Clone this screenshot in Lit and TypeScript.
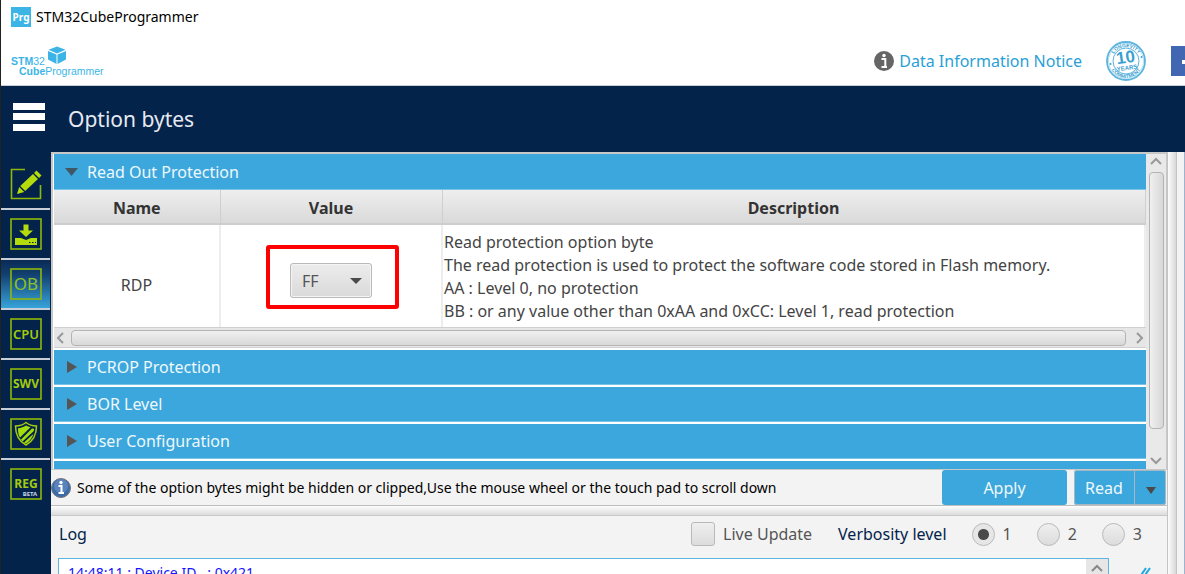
import { LitElement, html, css, svg } from "lit";
import { customElement, state } from "lit/decorators.js";

const up = svg`<path d="M2 9 L7 4 L12 9" />`;
const down = svg`<path d="M2 4 L7 9 L12 4" />`;
const left = svg`<path d="M9 2 L4 7 L9 12" />`;
const right = svg`<path d="M5 2 L10 7 L5 12" />`;

const chevron = (shape: unknown) =>
  html`<svg class="chevron" viewBox="0 0 14 14" width="14" height="14" aria-hidden="true">${shape}</svg>`;

@customElement("side-nav")
class SideNav extends LitElement {
  static styles = css`
    :host {
      display: block;
      background: #03234b;
      padding: 8px 1px 0 0;
    }
    .item {
      appearance: none;
      display: flex;
      align-items: center;
      justify-content: center;
      width: 100%;
      height: 50px;
      border: 0;
      border-bottom: 2px solid #c9ced6;
      padding: 0;
      background: none;
    }
    .item:last-child {
      border-bottom-color: transparent;
    }
    .active {
      background: linear-gradient(#0a2b55, #12406f 30%, #37a3da);
    }
  `;

  private icons: [string, unknown][] = [
    ["Memory & file editing", svg`
      <path d="M15 1.5H1.5V30.5H30.500V17" fill="none" stroke="#8fb80a" stroke-width="1.6" />
      <path d="M7 26l2.200-7 5 5zM10.200 18L23 6l5 5L15.200 23zM24 5l2.500-2.500 5 5L29 10z" fill="#b4dc0c" />`],
    ["Erasing & programming", svg`
      <rect x="1" y="1" width="30" height="30" fill="none" stroke="#8fb80a" stroke-width="1.6" />
      <path d="M13.500 6.500h5v6H23l-7 6.500-7-6.500h4.500z M5 20h6l5 2 5-2h6v7H5z" fill="#b4dc0c" />
      <path d="M19 24.500h1.500M22 24.500h1.500M25 24.500h1" stroke="#03234b" />`],
    ["Option bytes", svg`
      <rect x="1" y="1" width="30" height="30" fill="none" stroke="#8fb80a" stroke-width="1.6" />
      <text x="16" y="22" text-anchor="middle" font-family="Noto Sans, sans-serif" font-size="17" fill="#8fc31f">OB</text>`],
    ["CPU", svg`
      <rect x="1" y="1" width="30" height="30" fill="none" stroke="#8fb80a" stroke-width="1.6" />
      <text x="16" y="21" text-anchor="middle" font-family="Noto Sans, sans-serif" font-weight="600" font-size="13" fill="#a4cc0a">CPU</text>`],
    ["SWV", svg`
      <rect x="1" y="1" width="30" height="30" fill="none" stroke="#8fb80a" stroke-width="1.6" />
      <text x="16" y="20" text-anchor="middle" font-family="Noto Sans, sans-serif" font-weight="700" font-size="12" fill="#a4cc0a">SWV</text>`],
    ["Security", svg`
      <rect x="1" y="1" width="30" height="30" fill="none" stroke="#8fb80a" stroke-width="1.6" />
      <path d="M16 4.500C13 7 9 8 5.500 8c0 9 3 15 10.500 19C23.500 23 26.500 17 26.500 8 23 8 19 7 16 4.500z" fill="none" stroke="#a4cc0a" stroke-width="1.500" />
      <path d="M16 7.500c-2 1.500-5 2.500-8 2.700 0 4 .5 7 2 9.300L20.500 9.300C19 8.900 17.500 8.500 16 7.500zM11 21.500L22 10.500l2 .2-.2 2.300L12.500 23.500zM14 24.500l9.300-8.500c-1 4-3.300 7-7.300 9.500z" fill="#a4dc0c" />`],
    ["Registers", svg`
      <rect x="1" y="1" width="30" height="30" fill="none" stroke="#8fb80a" stroke-width="1.6" />
      <text x="16" y="20" text-anchor="middle" font-family="Noto Sans, sans-serif" font-weight="700" font-size="12" fill="#a4cc0a">REG</text>
      <text x="20" y="28" text-anchor="middle" font-family="Noto Sans, sans-serif" font-weight="700" font-size="6" fill="#c8d4e4">BETA</text>`],
  ];

  render() {
    return this.icons.map(
      ([name, icon]) => html`<button class="item ${name === "Option bytes" ? "active" : ""}" aria-label=${name}>
        <svg viewBox="0 0 32 32" width="32" height="32">${icon}</svg>
      </button>`,
    );
  }
}

@customElement("option-groups")
class OptionGroups extends LitElement {
  static styles = css`
    :host {
      display: grid;
      grid-template-columns: minmax(0, 1fr) 20px;
      min-height: 0;
      border: 1px solid #c8c8c8;
      border-width: 2px 1px 1px 2px;
      overflow: hidden;
      background: #fff;
    }
    .list {
      display: flex;
      flex-direction: column;
      gap: 2px;
      min-height: 0;
      overflow: hidden;
      padding-left: 1px;
    }
    .title {
      appearance: none;
      display: flex;
      flex: none;
      align-items: center;
      gap: 8px;
      width: 100%;
      height: 35px;
      box-sizing: border-box;
      border: 0;
      border-bottom: 1px solid #7cc3ea;
      padding: 0 11px;
      background: #3ca7dc;
      color: #eef8fd;
      font: inherit;
      text-align: left;
    }
    .title.open {
      height: 36px;
    }
    .marker {
      fill: #555;
    }
    .open .marker {
      fill: #3f5866;
    }
    .viewport {
      flex: none;
      height: 137px;
      overflow: hidden;
    }
    .group {
      flex: none;
    }
    table {
      width: 100%;
      border-collapse: collapse;
      table-layout: fixed;
      color: #444;
    }
    .name-col {
      width: 166px;
    }
    .value-col {
      width: 222px;
    }
    th {
      height: 34px;
      box-sizing: border-box;
      padding: 2px 0 0;
      border-right: 1px solid #cfcfcf;
      border-bottom: 2px solid #cdcdcd;
      background: linear-gradient(#eee, #d9d9d9);
      color: #333;
      font-weight: 700;
    }
    td {
      height: 118px;
      padding: 0 0 4px;
      border-right: 2px solid #ededed;
      text-align: center;
    }
    td.description {
      padding: 6px 0 0 1px;
      line-height: 23px;
      text-align: left;
      vertical-align: top;
      white-space: pre-line;
    }
    .highlight {
      display: inline-flex;
      border: 4px solid #f00;
      border-radius: 3px;
      padding: 14px 23px 7px 20px;
      margin: 0 0 16px 3px;
    }
    .combo {
      display: grid;
      align-items: center;
    }
    .combo > * {
      grid-area: 1 / 1;
    }
    select {
      appearance: none;
      width: 82px;
      height: 35px;
      border: 1px solid #b9b9b9;
      border-radius: 3px;
      padding: 0 11px;
      background: linear-gradient(#ececec, #dadada);
      box-shadow: inset 0 0 0 1px #f4f4f4;
      color: #555;
      font: inherit;
    }
    .arrow {
      justify-self: end;
      margin-right: 10px;
      fill: #4a4a4a;
      pointer-events: none;
    }
    .chevron {
      flex: none;
      fill: none;
      stroke: #999;
      stroke-width: 2;
    }
    .hbar {
      display: flex;
      align-items: center;
      height: 21px;
      box-sizing: border-box;
      border: 1px solid #d0d0d0;
      border-width: 1px 0;
      background: #e6e6e6;
    }
    .vbar {
      display: flex;
      flex-direction: column;
      align-items: center;
      background: #e9e9e9;
      padding: 1px 0;
    }
    .hthumb,
    .vthumb {
      box-sizing: border-box;
      border: 1px solid #b4b4b4;
      border-radius: 4px;
    }
    .hthumb {
      flex: 1;
      height: 16px;
      margin: 0 6px 0 3px;
      background: linear-gradient(#f0f0f0, #d8d8d8);
    }
    .vthumb {
      flex: 0 1 257px;
      width: 15px;
      margin-top: 3px;
      background: linear-gradient(90deg, #f0f0f0, #d8d8d8);
    }
    .spacer {
      flex: 1;
    }
  `;

  private renderTitle(name: string, open = false) {
    return html`<button class="title ${open ? "open" : ""}" aria-expanded=${open ? "true" : "false"}>
      <svg class="marker" viewBox="0 0 14 14" width="14" height="14">
        <path d=${open ? "M0 3h13L6.500 11z" : "M2 1v12l10-6z"} />
      </svg>
      ${name}
    </button>`;
  }

  render() {
    return html`
      <div class="list">
        <div class="group">
          ${this.renderTitle("Read Out Protection", true)}
          <div class="viewport">
            <table>
              <colgroup>
                <col class="name-col" />
                <col class="value-col" />
                <col />
              </colgroup>
              <thead>
                <tr><th>Name</th><th>Value</th><th>Description</th></tr>
              </thead>
              <tbody>
                <tr>
                  <td>RDP</td>
                  <td>
                    <span class="highlight">
                      <span class="combo">
                        <select aria-label="RDP value">
                          <option>FF</option>
                          <option>AA</option>
                          <option>BB</option>
                          <option>CC</option>
                        </select>
                        <svg class="arrow" viewBox="0 0 12 6" width="12" height="6"><path d="M0 0h12L6 6z" /></svg>
                      </span>
                    </span>
                  </td>
                  <td class="description">${[
                    "Read protection option byte",
                    "The read protection is used to protect the software code stored in Flash memory.",
                    "AA : Level 0, no protection",
                    "BB : or any value other than 0xAA and 0xCC: Level 1, read protection",
                    "CC : Level 2, chip protection",
                  ].join("\n")}</td>
                </tr>
              </tbody>
            </table>
          </div>
          <div class="hbar">${chevron(left)}<div class="hthumb"></div>${chevron(right)}</div>
        </div>
        ${["PCROP Protection", "BOR Level", "User Configuration", ""].map((n) => this.renderTitle(n))}
      </div>
      <div class="vbar">${chevron(up)}<div class="vthumb"></div><div class="spacer"></div>${chevron(down)}</div>
    `;
  }
}

@customElement("log-panel")
class LogPanel extends LitElement {
  static styles = css`
    :host {
      display: flex;
      flex-direction: column;
      min-height: 0;
      overflow: hidden;
      color: #03234b;
    }
    .bar {
      display: flex;
      flex: none;
      align-items: center;
      height: 42px;
      padding: 0 25px 6px 8px;
      box-sizing: border-box;
    }
    .grow {
      flex: 1;
    }
    label {
      display: flex;
      align-items: center;
      gap: 8px;
      color: #555;
    }
    fieldset {
      display: flex;
      align-items: center;
      gap: 25px;
      margin: 0 0 0 26px;
      border: 0;
      padding: 0;
    }
    input {
      appearance: none;
      flex: none;
      width: 24px;
      height: 24px;
      margin: 0;
      border: 1px solid #b9b9b9;
      background: linear-gradient(#efefef, #dcdcdc);
    }
    .check {
      border-radius: 3px;
    }
    .radio {
      width: 23px;
      height: 23px;
      border-radius: 50%;
    }
    .radio:checked {
      background: radial-gradient(circle, #4a4a4a 5px, #e6e6e6 6px);
    }
    .row {
      display: flex;
      flex: 1;
      padding-left: 7px;
      gap: 28px;
    }
    .output {
      flex: 1;
      box-sizing: border-box;
      display: flex;
      border: 1px solid #5bb5e0;
      border-width: 1px 1px 0 1px;
      background: #fff;
      color: #1414ff;
      font-size: 14px;
      line-height: 20px;
    }
    .line {
      flex: 1;
      padding: 4px 9px;
      white-space: pre;
    }
    .bar-cell {
      width: 22px;
      background: #e6e6e6;
      text-align: center;
    }
    .chevron {
      margin-top: 3px;
      fill: none;
      stroke: #888;
      stroke-width: 2;
    }
    .broom {
      flex: none;
      width: 30px;
      margin-top: 8px;
    }
  `;

  @state() private level = 1;

  render() {
    return html`
      <div class="bar">
        <span>Log</span>
        <span class="grow"></span>
        <label><input class="check" type="checkbox" />Live Update</label>
        <fieldset aria-label="Verbosity level">
          <span>Verbosity level</span>
          ${[1, 2, 3].map(
            (n) => html`<label>
              <input class="radio" type="radio" name="level" .checked=${n === this.level} @change=${() => (this.level = n)} />${n}
            </label>`,
          )}
        </fieldset>
      </div>
      <div class="row">
        <div class="output">
          <div class="line">14:48:11 : Device ID   : 0x421</div>
          <div class="bar-cell">${chevron(up)}</div>
        </div>
        <svg class="broom" viewBox="0 0 30 12" width="30" height="12" fill="none" stroke="#1ea7e0" stroke-width="2">
          <path d="M9 2L2 12M13 2L6 12" />
        </svg>
      </div>
    `;
  }
}

@customElement("app-root")
class AppRoot extends LitElement {
  static styles = css`
    :host {
      display: flex;
      flex-direction: column;
      height: 100vh;
      box-sizing: border-box;
      overflow: hidden;
      border-left: 1px solid #222;
      background: #fff;
      color: #111;
      font: 16px/20px "Noto Sans", "Open Sans", sans-serif;
    }
    .titlebar {
      display: flex;
      flex: none;
      align-items: center;
      gap: 5px;
      height: 33px;
      padding-left: 10px;
      color: #000;
      font-size: 14px;
    }
    .brandbar {
      display: flex;
      flex: none;
      align-items: center;
      height: 53px;
      padding: 4px 0 0 10px;
      box-sizing: border-box;
      border-bottom: 1px solid #c8ced8;
    }
    .grow {
      flex: 1;
    }
    .notice {
      display: flex;
      align-items: center;
      gap: 4px;
      margin-right: 24px;
      color: #2a9fd6;
      text-decoration: none;
    }
    .social {
      width: 14px;
      height: 30px;
      margin-left: 25px;
      background: #4267b2;
    }
    .header {
      display: flex;
      flex: none;
      align-items: center;
      gap: 23px;
      height: 66px;
      padding-left: 12px;
      background: #03234b;
      color: #e6eaf0;
    }
    .menu {
      appearance: none;
      display: flex;
      border: 0;
      padding: 0 0 4px;
      background: none;
    }
    h1 {
      margin: 0;
      font-size: 21px;
      font-weight: 400;
      line-height: 28px;
    }
    .body {
      display: grid;
      flex: 1;
      min-height: 0;
      grid-template-columns: 50px minmax(0, 1fr) 10px 8px;
    }
    .split {
      display: grid;
      grid-template-rows: minmax(0, 1fr) 36px 10px 58px;
      min-height: 0;
      background: #f3f3f3;
    }
    .hint {
      display: flex;
      align-items: center;
      gap: 6px;
      border-bottom: 1px solid #bdbdbd;
      color: #000;
      font-size: 14px;
    }
    .action {
      appearance: none;
      height: 35px;
      border: 0;
      border-radius: 3px;
      padding: 0;
      background: #3ca7dc;
      color: #eef8fd;
      font: inherit;
      font-size: 16px;
    }
    .apply {
      width: 125px;
    }
    .read {
      display: flex;
      margin: 0 1px;
      border-radius: 3px;
      background: #3ca7dc;
      box-shadow: inset 0 0 0 1px #a7b8c2;
    }
    .read .action {
      width: 60px;
      background: none;
    }
    .read .more {
      width: 32px;
      border-left: 1px solid #a7b8c2;
      border-radius: 0;
    }
    .hsplit {
      border-bottom: 1px solid #c8c8c8;
      background: linear-gradient(#fdfdfd, #dcdcdc);
    }
    .vsplit {
      border: 1px solid #c4c4c4;
      border-width: 0 1px;
      background: linear-gradient(90deg, #fdfdfd, #d8d8d8);
    }
    .next {
      border-right: 1px solid #9db2cc;
      background: #f3f3f3;
    }
  `;

  render() {
    return html`
      <div class="titlebar">
        <svg viewBox="0 0 20 20" width="20" height="20">
          <rect width="20" height="20" fill="#3cb4e6" />
          <text x="10" y="14" text-anchor="middle" font-family="Noto Sans, sans-serif" font-weight="700" font-size="10" fill="#fff">Prg</text>
        </svg>
        <span>STM32CubeProgrammer</span>
      </div>
      <div class="brandbar">
        <svg viewBox="0 0 94 32" width="94" height="32" font-family="Liberation Sans, sans-serif" fill="#3cb4e6" role="img" aria-label="STM32CubeProgrammer">
          <text x="0" y="20" font-size="10.5" font-weight="700">STM<tspan font-weight="400">32</tspan></text>
          <text x="8" y="30" font-size="10.5" font-weight="700">Cube<tspan font-weight="400">Programmer</tspan></text>
          <path d="M46 1.500l8.500 3.300-8.500 3.800-8.500-3.800zM37 6l8.500 3.500V19L37 14.500zM55 6l-8.500 3.500V19l8.500-4.500z" />
        </svg>
        <span class="grow"></span>
        <a class="notice" href="#notice">
          <svg viewBox="0 0 22 22" width="22" height="22">
            <circle cx="11" cy="11" r="10" fill="#666" />
            <circle cx="11" cy="5.500" r="1.700" fill="#fff" />
            <path d="M8.500 9h3.800v7M8.500 17h5.500" fill="none" stroke="#fff" stroke-width="2" />
          </svg>
          Data Information Notice
        </a>
        <svg viewBox="0 0 40 40" width="40" height="40" role="img" aria-label="Longevity 10 years commitment">
          <defs>
            <path id="top" d="M6 20a14 14 0 0 1 28 0" />
            <path id="bottom" d="M3 20a17 17 0 0 0 34 0" />
          </defs>
          <circle cx="20" cy="20" r="19" fill="none" stroke="#5cb4de" stroke-width="1.800" />
          <circle cx="20" cy="20" r="17.500" fill="none" stroke="#8accea" stroke-width="0.600" />
          <circle cx="20" cy="20" r="13" fill="#fff" stroke="#5cb4de" stroke-width="1" />
          <g font-family="Liberation Sans, sans-serif" font-weight="700" fill="#3a9fd0" text-anchor="middle">
            <text font-size="5"><textPath href="#top" startOffset="50%">LONGEVITY</textPath></text>
            <text font-size="5"><textPath href="#bottom" startOffset="50%">COMMITMENT</textPath></text>
            <text x="20" y="22" font-size="17" transform="rotate(-8 20 20)">10</text>
            <text x="20" y="29" font-size="6" transform="rotate(-8 20 20)">YEARS</text>
          </g>
          <circle cx="4.500" cy="23" r="1" fill="#3a9fd0" />
          <circle cx="35.500" cy="16" r="1" fill="#3a9fd0" />
        </svg>
        <svg class="social" viewBox="0 0 14 30"><path d="M11 16h3" stroke="#fff" stroke-width="4" /></svg>
      </div>
      <div class="header">
        <button class="menu" aria-label="Menu">
          <svg viewBox="0 0 32 28" width="32" height="28"><path d="M0 0h32v7H0zM0 10h32v7H0zM0 21h32v7H0z" fill="#fff" /></svg>
        </button>
        <h1>Option bytes</h1>
      </div>
      <div class="body">
        <side-nav></side-nav>
        <main class="split">
          <option-groups></option-groups>
          <div class="hint">
            <svg viewBox="0 0 20 20" width="20" height="20">
              <circle cx="10" cy="10" r="9.500" fill="#3c6ca8" stroke="#777" />
              <circle cx="10" cy="8" r="7" fill="#6a94c8" opacity="0.6" />
              <circle cx="10" cy="4.500" r="1.700" fill="#fff" />
              <path d="M7.500 8h3v7M7.500 15h5.500" fill="none" stroke="#fff" stroke-width="2" />
            </svg>
            <span>Some of the option bytes might be hidden or clipped,Use the mouse wheel or the touch pad to scroll down</span>
            <span class="grow"></span>
            <button class="action apply">Apply</button>
            <span class="read">
              <button class="action">Read</button>
              <button class="action more" aria-label="More read options">
                <svg viewBox="0 0 10 7" width="10" height="7"><path d="M0 0h10L5 7z" fill="#4a4a4a" /></svg>
              </button>
            </span>
          </div>
          <div class="hsplit"></div>
          <log-panel></log-panel>
        </main>
        <div class="vsplit"></div>
        <div class="next"></div>
      </div>
    `;
  }
}
